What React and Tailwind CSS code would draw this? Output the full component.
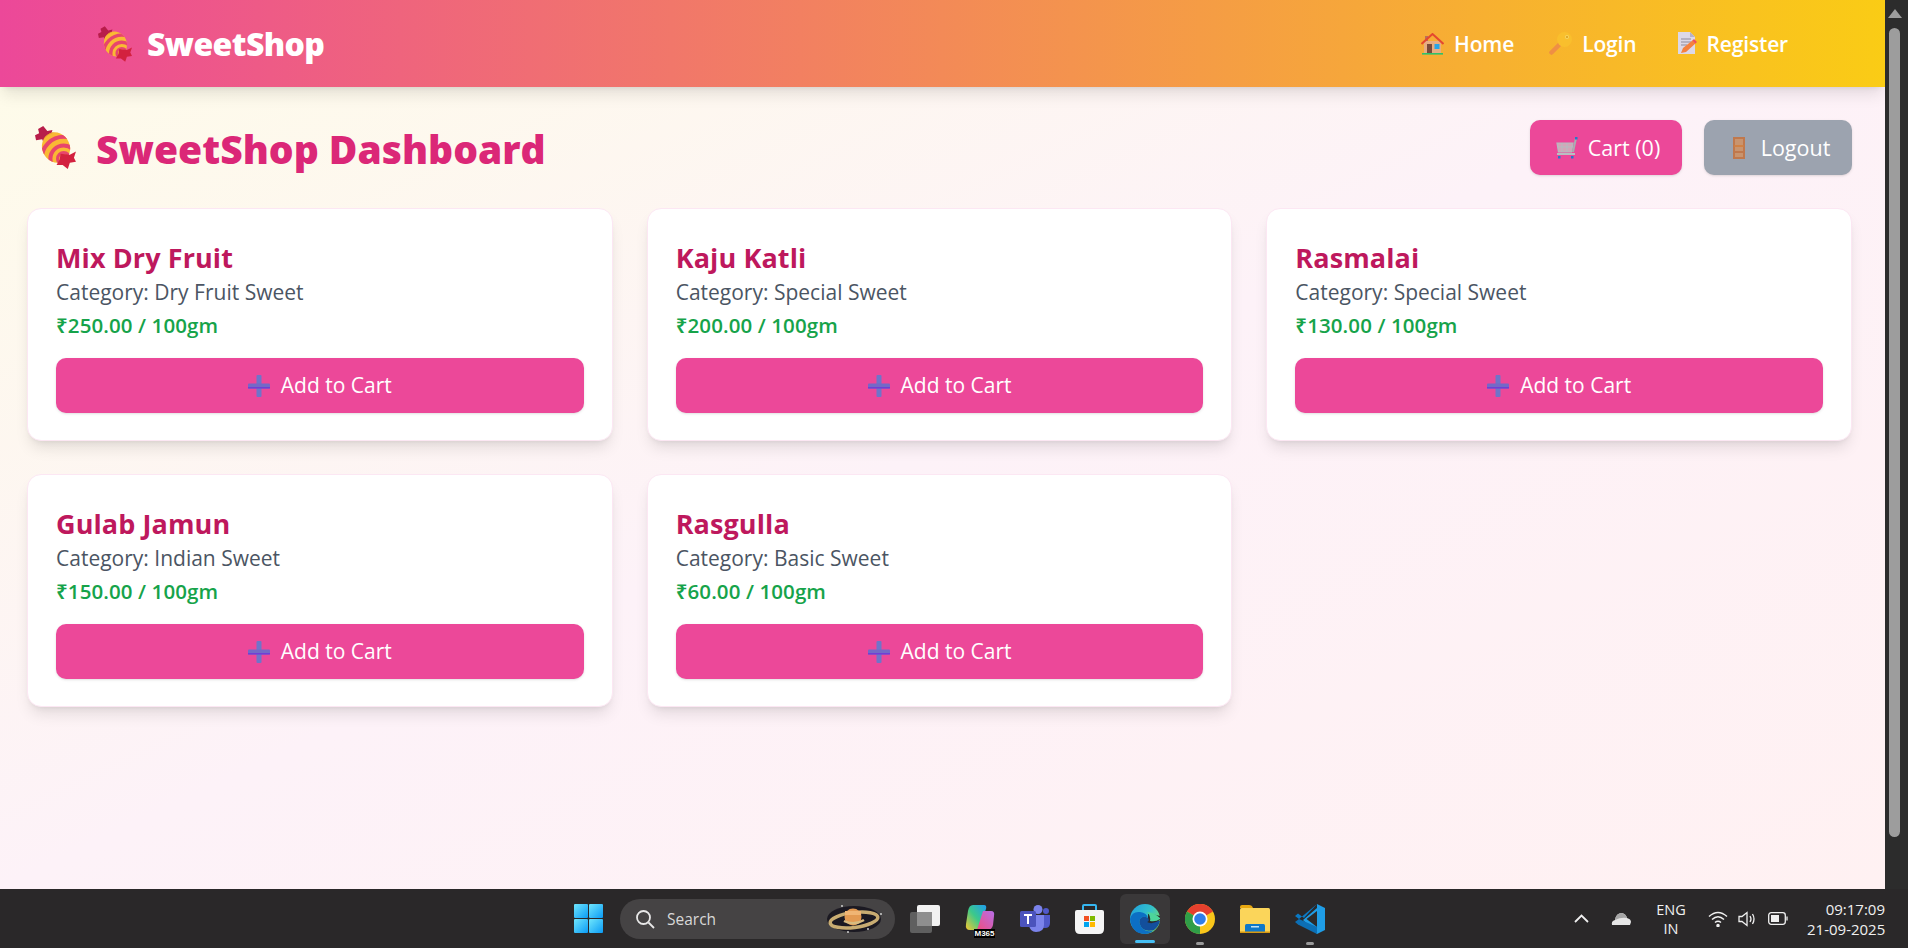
import React from "react";

const Candy = ({ className }) => (
  <svg viewBox="0 0 40 42" className={className}>
    <defs>
      <clipPath id="cb"><ellipse cx="20.5" cy="21" rx="13.5" ry="15" transform="rotate(-25 20.5 21)" /></clipPath>
    </defs>
    <path d="M8 0 L12 5 L17 4 L15 11 L9 18 L7 13 L1 14 L0 9 L4 7 L3 3 Z" fill="#b81d4a" />
    <g clipPath="url(#cb)">
      <rect width="40" height="42" fill="#f9b934" />
      <circle cx="28" cy="32" r="29" fill="none" stroke="#e8962f" strokeWidth="3" />
      <circle cx="28" cy="32" r="21.5" fill="none" stroke="#e8456c" strokeWidth="4" />
      <circle cx="28" cy="32" r="13" fill="none" stroke="#e8456c" strokeWidth="4" />
      <circle cx="28" cy="32" r="6" fill="none" stroke="#e8456c" strokeWidth="3" />
      <path d="M4 20 Q8 34 22 38 L4 38 Z" fill="#c9855a" opacity="0.6" />
    </g>
    <path d="M25 27 L34 28 L40 25 L38 31 L40 35 L34 36 L32 42 L27 38 L21 38 L24 33 Z" fill="#d3213f" />
  </svg>
);

const House = ({ className }) => (
  <svg viewBox="0 0 23 22" className={className}>
    <rect x="4" y="3" width="3" height="6" fill="#b9705a" />
    <rect x="3" y="8" width="17" height="12" fill="#e8ad82" />
    <path d="M0.5 11 L11.5 1 L22.5 11" fill="none" stroke="#e5482f" strokeWidth="2" />
    <rect x="6" y="11" width="5" height="9" fill="#7a4a3a" />
    <rect x="13.5" y="11" width="5" height="5" fill="#27a5e8" />
    <rect x="1" y="20" width="21" height="1.6" fill="#2fc26b" />
  </svg>
);

const Key = ({ className }) => (
  <svg viewBox="0 0 23 23" className={className}>
    <path d="M13 10 L2.5 20.5" stroke="#ef8f44" strokeWidth="4.5" strokeLinecap="round" />
    <circle cx="15.5" cy="7.5" r="7.5" fill="#f9bf2d" />
    <circle cx="18" cy="5" r="2" fill="#f7d560" />
    <circle cx="18" cy="5" r="1" fill="#d99a1a" />
  </svg>
);

const Memo = ({ className }) => (
  <svg viewBox="0 0 20 23" className={className}>
    <path d="M1 0 H13 L18 5 V22 H1 Z" fill="#dcd8e8" />
    <path d="M13 0 L18 5 H13 Z" fill="#b7b1c9" />
    <path d="M4 7 H14 M4 10 H14 M4 13 H10" stroke="#8f8a9c" strokeWidth="1" />
    <path d="M4 21 L6 16 L16 8 L19 11 L9 20 Z" fill="#f5813f" />
    <path d="M15.5 8.5 L17 7 L20 10 L18.5 11.5 Z" fill="#ef4f5d" />
  </svg>
);

const Cart = ({ className }) => (
  <svg viewBox="0 0 22 22" className={className}>
    <path d="M1 6 H17 L15.5 15 H2.5 Z" fill="#d3a6b8" stroke="#b4bcc0" strokeWidth="1.2" />
    <path d="M2 10 H16 M6 6 V15 M11 6 V15" stroke="#b4bcc0" strokeWidth="1" />
    <path d="M20 1 L17 15" stroke="#a9aeb2" strokeWidth="2" />
    <rect x="19" y="0" width="2.5" height="2.5" fill="#2577c9" />
    <path d="M1 17 H19" stroke="#b9bec2" strokeWidth="2" />
    <rect x="2" y="19" width="2.5" height="2.5" fill="#2577c9" />
    <rect x="15" y="19" width="2.5" height="2.5" fill="#2577c9" />
  </svg>
);

const Door = ({ className }) => (
  <svg viewBox="0 0 13 22" className={className}>
    <rect x="0.5" y="0" width="12" height="22" fill="#c0784c" />
    <rect x="2.5" y="2" width="8" height="6" fill="#c9946e" />
    <rect x="2.5" y="10" width="8" height="4" fill="#c9946e" />
    <rect x="2.5" y="16" width="8" height="4" fill="#c9946e" />
    <rect x="2" y="8.5" width="9" height="1" fill="#e08a3c" />
  </svg>
);

const Plus = ({ className }) => (
  <svg viewBox="0 0 22 22" className={className}>
    <rect x="8.5" y="0" width="5" height="22" rx="1" fill="#6f74c9" />
    <rect x="0" y="8.5" width="22" height="5" rx="1" fill="#7369c8" />
    <rect x="0" y="12" width="22" height="1.5" fill="#6f3fd6" />
  </svg>
);

const WinLogo = () => (
  <svg viewBox="0 0 29 29" className="w-[29px] h-[29px]">
    <defs>
      <linearGradient id="wl" x1="0" y1="0" x2="1" y2="1">
        <stop offset="0" stopColor="#6fe6fc" />
        <stop offset="1" stopColor="#0a9bf5" />
      </linearGradient>
    </defs>
    <rect x="0" y="0" width="14" height="14" rx="1" fill="url(#wl)" />
    <rect x="15" y="0" width="14" height="14" rx="1" fill="url(#wl)" />
    <rect x="0" y="15" width="14" height="14" rx="1" fill="url(#wl)" />
    <rect x="15" y="15" width="14" height="14" rx="1" fill="url(#wl)" />
  </svg>
);

const Saturn = () => (
  <svg viewBox="0 0 60 32" className="w-[60px] h-[32px]">
    <ellipse cx="30" cy="16" rx="27" ry="13" fill="#1b1922" />
    <ellipse cx="30" cy="17" rx="24" ry="7.5" fill="none" stroke="#c8ac72" strokeWidth="3.5" transform="rotate(-7 30 17)" />
    <circle cx="29" cy="14" r="8.5" fill="#e39a52" />
    <rect x="21" y="8" width="16" height="4" fill="#f0b574" />
    <path d="M20 18 Q30 23 40 17" fill="none" stroke="#d8bb80" strokeWidth="2.5" />
    <circle cx="18" cy="3" r="0.9" fill="#ddd" />
    <circle cx="57" cy="11" r="0.9" fill="#ddd" />
    <circle cx="44" cy="26" r="0.9" fill="#ddd" />
    <circle cx="24" cy="29" r="0.9" fill="#ddd" />
  </svg>
);

const TaskView = () => (
  <svg viewBox="0 0 30 28" className="w-[30px] h-[28px]">
    <rect x="0" y="7" width="22" height="21" rx="2" fill="#5f5f5f" />
    <rect x="7" y="0" width="23" height="21" rx="2" fill="#f2f2f2" />
    <rect x="7" y="7" width="15" height="14" fill="#8e8e8e" />
  </svg>
);

const M365 = () => (
  <div className="relative w-[30px] h-[28px]">
    <svg viewBox="0 0 30 28" className="w-[30px] h-[28px]">
      <defs>
        <linearGradient id="m1" x1="0" y1="1" x2="1" y2="0">
          <stop offset="0" stopColor="#f7c72f" />
          <stop offset="0.5" stopColor="#3cc98a" />
          <stop offset="1" stopColor="#1f9df0" />
        </linearGradient>
        <linearGradient id="m2" x1="0" y1="1" x2="1" y2="0">
          <stop offset="0" stopColor="#f04d7f" />
          <stop offset="1" stopColor="#b66ee8" />
        </linearGradient>
      </defs>
      <path d="M8 0 H19 Q22 0 21 4 L14 22 Q13 25 10 25 H5 Q0 25 1 19 L3 6 Q4 0 8 0 Z" fill="url(#m1)" />
      <path d="M18 6 H26 Q30 6 29 11 L28 20 Q27 25 22 25 H12 Z" fill="url(#m2)" />
    </svg>
    <span className="absolute right-0 bottom-[-5px] w-[21px] h-[9px] bg-black text-white text-[8px] leading-[9px] text-center font-bold font-['Liberation_Sans',sans-serif]">M365</span>
  </div>
);

const Teams = () => (
  <svg viewBox="0 0 30 27" className="w-[30px] h-[27px]">
    <circle cx="18" cy="4.5" r="4.5" fill="#7b83eb" />
    <circle cx="26" cy="6" r="3" fill="#5059c9" />
    <path d="M20 10 H30 V18 Q30 23 25 23 Q21 23 20 20 Z" fill="#5059c9" />
    <path d="M9 10 H24 V20 Q24 27 16 27 Q10 27 9 20 Z" fill="#7b83eb" />
    <rect x="0" y="6" width="16" height="16" rx="1.5" fill="#4b53bc" />
    <path d="M4 10 H12 M8 10 V19" stroke="#fff" strokeWidth="2" />
  </svg>
);

const Store = () => (
  <svg viewBox="0 0 29 30" className="w-[29px] h-[30px]">
    <path d="M8 7 V2 Q8 1 9 1 H20 Q21 1 21 2 V7" fill="none" stroke="#35b6f0" strokeWidth="2" />
    <path d="M2 6 H27 Q29 6 29 8 V25 Q29 30 24 30 H5 Q0 30 0 25 V8 Q0 6 2 6 Z" fill="#f5f5f5" />
    <rect x="9" y="12" width="5" height="5" fill="#f25022" />
    <rect x="15" y="12" width="5" height="5" fill="#7fba00" />
    <rect x="9" y="18" width="5" height="5" fill="#00a4ef" />
    <rect x="15" y="18" width="5" height="5" fill="#ffb900" />
  </svg>
);

const Edge = () => (
  <svg viewBox="0 0 30 30" className="w-[30px] h-[30px]">
    <defs>
      <linearGradient id="e1" x1="0" y1="0" x2="1" y2="0.6">
        <stop offset="0" stopColor="#1e9fe0" />
        <stop offset="0.6" stopColor="#34c1c9" />
        <stop offset="1" stopColor="#7be06a" />
      </linearGradient>
    </defs>
    <circle cx="15" cy="15" r="15" fill="url(#e1)" />
    <path d="M0 15 Q2 7 10 8 Q17 9 18 14 Q13 11 10 15 Q8 20 13 25 Q18 29 24 26 Q20 30 15 30 Q2 30 0 15 Z" fill="#0c6fc4" />
    <path d="M10 15 Q13 11 18 14 L30 17 Q29 22 24 26 Q17 28 13 25 Q8 20 10 15 Z" fill="#134f9c" />
    <path d="M18 14 Q20 17 17 18 Q22 21 30 16 L30 12 Q24 10 18 10 Z" fill="#2b2a2b" />
    <path d="M17 8 Q24 8 30 14 L30 15 Q26 18 20 17 Q21 12 17 8 Z" fill="#4dd59a" />
  </svg>
);

const Chrome = () => (
  <svg viewBox="0 0 30 30" className="w-[30px] h-[30px]">
    <circle cx="15" cy="15" r="15" fill="#f9c61a" />
    <path d="M15 15 L2 7.5 A15 15 0 0 1 28 7.5 Z" fill="#e5402e" />
    <path d="M15 15 L2 7.5 A15 15 0 0 0 15 30 Z" fill="#2f9e48" />
    <circle cx="15" cy="15" r="7.5" fill="#fff" />
    <circle cx="15" cy="15" r="5.8" fill="#2f7ee8" />
  </svg>
);

const Folder = () => (
  <svg viewBox="0 0 30 28" className="w-[30px] h-[28px]">
    <path d="M0 2 Q0 0 2 0 H9 Q12 0 13 3 H0 Z" fill="#e8a810" />
    <rect x="0" y="3" width="30" height="25" rx="1.5" fill="#fbd55a" />
    <rect x="5" y="19" width="20" height="9" rx="1.5" fill="#0f78c9" />
    <rect x="11" y="21" width="8" height="1.5" fill="#bfe2f7" />
    <rect x="0" y="26.5" width="30" height="1.5" fill="#d99a10" />
  </svg>
);

const VSCode = () => (
  <svg viewBox="0 0 30 30" className="w-[30px] h-[30px]">
    <path d="M22 0 L30 4 V26 L22 30 L8 16 L22 4 Z" fill="#1f9de6" />
    <path d="M22 7 L11.5 15 L22 23 Z" fill="#2b2a2b" />
    <path d="M22 0 L4 15 L0 12 L3 9.5 L9 14 Z" fill="#0a79c4" />
    <path d="M4 15 L0 18 L3 20.5 L22 30 V23 Z" fill="#0c6fb5" />
  </svg>
);

const products = [
  { name: "Mix Dry Fruit", cat: "Dry Fruit Sweet", price: "₹250.00 / 100gm" },
  { name: "Kaju Katli", cat: "Special Sweet", price: "₹200.00 / 100gm" },
  { name: "Rasmalai", cat: "Special Sweet", price: "₹130.00 / 100gm" },
  { name: "Gulab Jamun", cat: "Indian Sweet", price: "₹150.00 / 100gm" },
  { name: "Rasgulla", cat: "Basic Sweet", price: "₹60.00 / 100gm" },
];

function Card({ p }) {
  return (
    <div className="h-[233px] bg-white rounded-[14px] border border-pink-100 shadow-lg px-[28px] pt-[31px] pb-[27px] flex flex-col">
      <h2 className="text-[27px] leading-[36px] font-bold text-[#be185d] tracking-[0.1px]">{p.name}</h2>
      <p className="mt-[0.5px] text-[21px] leading-[30px] text-[#4b5563]">Category: {p.cat}</p>
      <p className="text-[20.5px] leading-[36px] font-semibold text-[#16a34a] tracking-[0.1px]">{p.price}</p>
      <button className="mt-auto h-[55px] w-full bg-[#ec4899] rounded-[10px] shadow flex items-center justify-center gap-[11px] text-white text-[21px]">
        <Plus className="w-[22px] h-[22px]" />
        <span className="pt-[1px]">Add to Cart</span>
      </button>
    </div>
  );
}

function NavLink({ icon, label, className }) {
  return (
    <a className={`flex items-center gap-[10px] text-white text-[21px] font-semibold tracking-[-0.15px] ${className}`}>
      {icon}
      <span className="pt-[3px]">{label}</span>
    </a>
  );
}

export default function App() {
  return (
    <div className="h-screen w-full flex flex-col overflow-hidden font-['Open_Sans','Noto_Sans',sans-serif]">
      <div className="flex-1 flex min-h-0">
        <main className="flex-1 min-w-0 bg-linear-to-br/srgb from-[#fefce8] via-[#fdf2f8] to-[#fff1f2]">
          <nav className="h-[87px] pl-[98px] pr-[97px] flex items-center justify-between bg-linear-to-r/srgb from-[#ec4899] to-[#facc15] shadow-lg">
            <div className="flex items-center gap-[15px]">
              <Candy className="w-[34px] h-[36px]" />
              <span className="text-white text-[32px] font-extrabold tracking-[-0.6px]">SweetShop</span>
            </div>
            <div className="flex items-center">
              <NavLink icon={<House className="w-[23px] h-[22px]" />} label="Home" />
              <NavLink icon={<Key className="w-[23px] h-[23px]" />} label="Login" className="ml-[35px]" />
              <NavLink icon={<Memo className="w-[20px] h-[23px]" />} label="Register" className="ml-[40px]" />
            </div>
          </nav>
          <div className="pl-[27px] pr-[33px] pt-[33px]">
            <div className="flex items-center justify-between h-[55px]">
              <h1 className="flex items-center gap-[20px] pl-[8px] text-[39px] font-extrabold text-[#db2777]">
                <Candy className="w-[41px] h-[43px]" />
                <span className="pt-[4px]">SweetShop Dashboard</span>
              </h1>
              <div className="flex gap-[22px]">
                <button className="w-[152px] h-[55px] pl-[4px] bg-[#ec4899] rounded-[10px] shadow flex items-center justify-center gap-[10px] text-white text-[21.5px]">
                  <Cart className="w-[22px] h-[22px]" />
                  <span className="pt-[1px]">Cart (0)</span>
                </button>
                <button className="w-[148px] h-[55px] pl-[6px] bg-[#9ca3af] rounded-[10px] shadow flex items-center justify-center gap-[15px] text-white text-[21.5px]">
                  <Door className="w-[14px] h-[22px]" />
                  <span className="pt-[1px]">Logout</span>
                </button>
              </div>
            </div>
            <div className="mt-[33px] grid grid-cols-3 gap-x-[34px] gap-y-[33px]">
              {products.map((p) => <Card key={p.name} p={p} />)}
            </div>
          </div>
        </main>
        <div className="w-[23px] bg-[#2c2c2c] flex flex-col items-center pr-[4px]">
          <div className="mt-[9px] w-0 h-0 border-l-[7px] border-r-[7px] border-b-[9px] border-l-transparent border-r-transparent border-b-[#9d9d9d]" />
          <div className="mt-[10px] w-[11px] h-[809px] rounded-full bg-[#9d9d9d]" />
        </div>
      </div>
      <footer className="h-[59px] bg-[#2a2829] flex items-center pl-[574px] pr-[23px] text-white font-['Open_Sans',sans-serif]">
        <WinLogo />
        <div className="ml-[17px] w-[275px] h-[40px] rounded-full bg-[#454344] flex items-center pl-[15px] pr-[11px] text-[#d8d8d8] text-[15.5px]">
          <svg viewBox="0 0 20 20" className="w-[20px] h-[20px]" fill="none" stroke="#e8e8e8" strokeWidth="1.8"><circle cx="8.5" cy="8.5" r="6.5" /><path d="M13.5 13.5 L19 19" /></svg>
          <span className="ml-[12px] pt-[2px]">Search</span>
          <span className="ml-auto"><Saturn /></span>
        </div>
        <div className="ml-[15px]"><TaskView /></div>
        <div className="ml-[25px]"><M365 /></div>
        <div className="ml-[25px]"><Teams /></div>
        <div className="ml-[25px]"><Store /></div>
        <div className="relative ml-[16px] w-[50px] h-[50px] rounded-md bg-[#3a3839] flex items-center justify-center">
          <Edge />
          <span className="absolute bottom-[1px] left-[15px] w-[20px] h-[3px] rounded-full bg-[#47c0f5]" />
        </div>
        <div className="relative ml-[15px]"><Chrome /><span className="absolute left-[11px] bottom-[-11px] w-[8px] h-[3px] rounded-full bg-[#9a9a9a]" /></div>
        <div className="ml-[25px]"><Folder /></div>
        <div className="relative ml-[25px]"><VSCode /><span className="absolute left-[11px] bottom-[-11px] w-[8px] h-[3px] rounded-full bg-[#9a9a9a]" /></div>
        <div className="ml-auto flex items-center">
          <svg viewBox="0 0 15 9" className="w-[15px] h-[9px]" fill="none" stroke="#f0f0f0" strokeWidth="1.8"><path d="M1 8 L7.5 1.5 L14 8" /></svg>
          <svg viewBox="0 0 20 13" className="ml-[22px] w-[20px] h-[13px]"><path d="M1 13 Q0 9 4 8 Q5 1 11 1 Q15 2 16 6 Q20 7 20 10 L19 13 Z" fill="#e6e6e6" /><path d="M4 8 Q5 1 11 1 Q15 2 16 6 Q10 5 4 8 Z" fill="#a5a5a5" /></svg>
          <div className="ml-[22px] w-[36px] text-center text-[14.5px] leading-[19px] text-[#f0f0f0]">ENG<br />IN</div>
          <svg viewBox="0 0 20 16" className="ml-[19px] w-[20px] h-[16px]" fill="none" stroke="#f0f0f0" strokeWidth="1.5"><path d="M1 5.5 Q10 -2.5 19 5.5" /><path d="M4 8.5 Q10 3 16 8.5" /><path d="M7 11.5 Q10 9 13 11.5" /><circle cx="10" cy="14.5" r="1" fill="#f0f0f0" /></svg>
          <svg viewBox="0 0 20 16" className="ml-[10px] w-[20px] h-[16px]" fill="none" stroke="#f0f0f0" strokeWidth="1.3"><path d="M1 5.5 H4 L9 1.5 V14.5 L4 10.5 H1 Z" /><path d="M12 5 Q14 8 12 11" /><path d="M14.5 3 Q17.5 8 14.5 13" /></svg>
          <svg viewBox="0 0 20 13" className="ml-[10px] w-[20px] h-[13px]" fill="none" stroke="#f0f0f0" strokeWidth="1.3"><rect x="0.7" y="0.7" width="16.6" height="11.6" rx="2.5" /><rect x="3" y="3" width="8" height="7" fill="#f0f0f0" stroke="none" /><path d="M19 4.5 V8.5" /></svg>
          <div className="ml-[19px] w-[78px] text-right text-[15px] leading-[20px] text-[#f0f0f0] whitespace-nowrap">09:17:09<br />21-09-2025</div>
        </div>
      </footer>
    </div>
  );
}
